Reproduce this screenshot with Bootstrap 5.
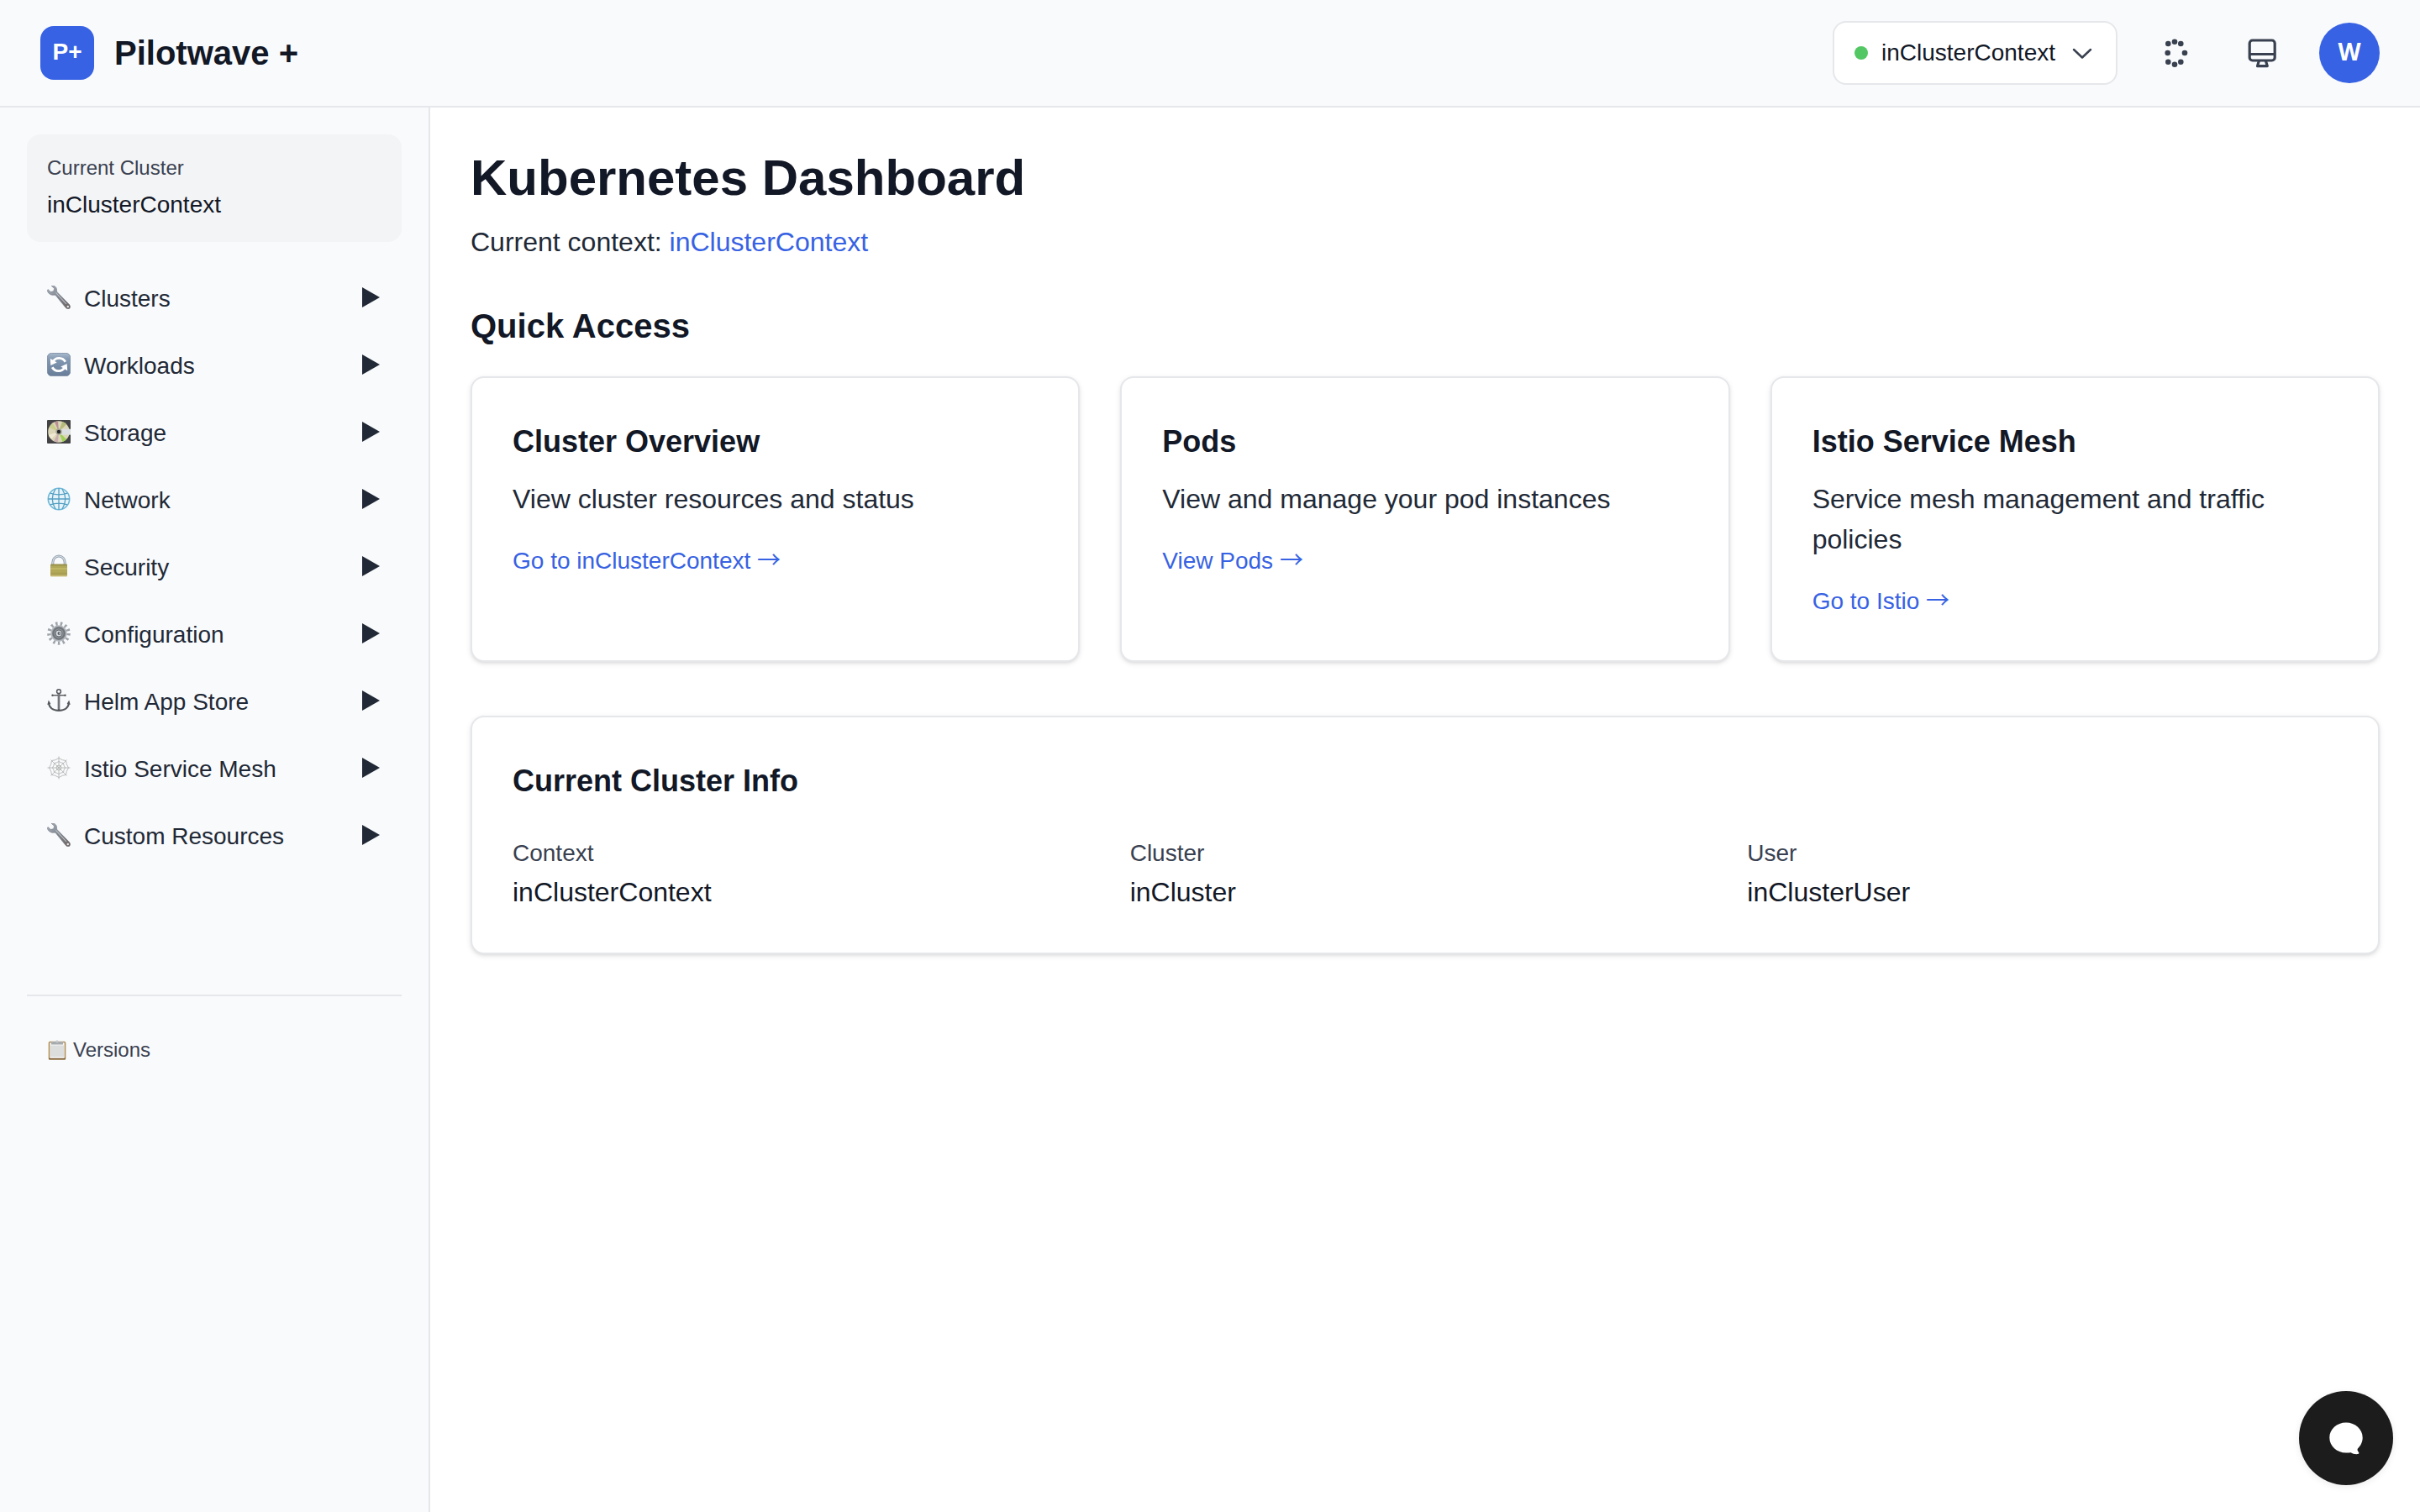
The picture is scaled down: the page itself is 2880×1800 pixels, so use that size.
<!DOCTYPE html>
<html lang="en">
<head>
<meta charset="utf-8">
<meta name="viewport" content="width=device-width, initial-scale=1">
<title>Pilotwave +</title>
<link href="https://cdn.jsdelivr.net/npm/bootstrap@5.3.0/dist/css/bootstrap.min.css" rel="stylesheet">
<style>
:root { --line:#e5e7ea; --ink:#121826; --ink-2:#212936; --ink-3:#394150; --brand:#3762e3; --pale:#f9fafc; }
body { font-family:"Liberation Sans",Arial,sans-serif; font-size:32px; line-height:48px; color:var(--ink-2); background:#fff; }
h1,h2,h3,p { margin:0; line-height:56px; font-weight:700; color:var(--ink); }
p { font-weight:400; line-height:48px; color:var(--ink-2); }
a { color:var(--brand); text-decoration:none; }
.topbar { background:var(--pale); border-bottom:2px solid var(--line); padding:25px 48px; }
.brand-mark { width:64px; height:64px; border-radius:16px; background:var(--brand); color:#fff; font-size:28px; font-weight:700; padding-bottom:2px; }
.brand-name { font-size:40px; font-weight:700; line-height:56px; color:var(--ink); }
.top-tools { gap:32px; }
.ctx-btn { background:#fff; border:2px solid var(--line); border-radius:16px; padding:16px 24px; font-size:28px; line-height:40px; color:var(--ink); }
.ctx-dot { width:16px; height:16px; border-radius:50%; background:#52c763; }
.tool-btn, .avatar { width:72px; height:72px; border:0; border-radius:50%; background:none; color:var(--ink-3); padding:0; }
.avatar { background:var(--brand); color:#fff; font-family:"Open Sans","Liberation Sans",sans-serif; font-size:28px; font-weight:700; padding-bottom:4px; }
.sidebar { width:512px; background:var(--pale); border-right:2px solid var(--line); padding:32px; }
.now-box { background:#f3f4f6; border-radius:16px; padding:24px; }
.tiny { font-size:24px; line-height:32px; color:var(--ink-3); }
.text-28 { font-size:28px; line-height:40px; color:var(--ink); }
.side-btn { border:0; background:none; padding:16px 24px; font-size:28px; line-height:40px; color:var(--ink-2); text-align:left; }
.side-foot { border-top:2px solid var(--line); margin-top:152px; padding-top:32px; }
.side-foot a { padding:16px 24px; gap:7px; }
.content { padding:48px; min-width:0; }
.content h1 { font-size:60px; line-height:72px; }
.content h2 { font-size:40px; }
.content h3 { font-size:36px; }
.tiles { display:grid; grid-template-columns:repeat(3,minmax(0,1fr)); gap:48px; }
.facts { display:grid; grid-template-columns:repeat(3,minmax(0,1fr)); gap:32px; margin-top:32px; }
.facts p { color:var(--ink); }
.info { margin-top:64px; }
.panel { background:#fff; border:2px solid var(--line); border-radius:16px; padding:48px; box-shadow:0 2px 6px rgba(0,0,0,.1),0 2px 4px -2px rgba(0,0,0,.1); }
.small-in { font-size:28px; line-height:40px; }
.label-in { font-size:28px; line-height:40px; color:var(--ink-3); }
.arrow { font-family:"Noto Sans CJK JP",sans-serif; line-height:32px; }
.chat { position:fixed; right:32px; bottom:32px; width:112px; height:112px; border:0; border-radius:50%; background:#1c1c1c; box-shadow:0 2px 8px rgba(0,0,0,.08); padding:0; }
svg { display:block; flex:none; }
</style>
<script src="https://cdn.jsdelivr.net/npm/bootstrap@5.3.0/dist/js/bootstrap.bundle.min.js"></script>
</head>
<body class="d-flex flex-column min-vh-100">
<svg width="0" height="0" class="position-absolute" aria-hidden="true">
  <defs>
    <linearGradient id="steel" x1="0" y1="0" x2="1" y2="1"><stop offset="0" stop-color="#a9b3bf"/><stop offset=".5" stop-color="#7d838c"/><stop offset="1" stop-color="#6d6260"/></linearGradient>
    <linearGradient id="blue" x1="0" y1="0" x2="0" y2="1"><stop offset="0" stop-color="#a9bacd"/><stop offset=".25" stop-color="#8499b2"/><stop offset="1" stop-color="#677d99"/></linearGradient>
    <linearGradient id="brass" x1="0" y1="0" x2="0" y2="1"><stop offset="0" stop-color="#8f8742"/><stop offset=".3" stop-color="#c2b966"/><stop offset=".8" stop-color="#a89d50"/><stop offset="1" stop-color="#d3c98a"/></linearGradient>
    <symbol id="wrench" viewBox="0 0 28 28">
      <path d="M5.200.3c3.300-.7 6.200 1.300 6.300 4.600.1 1.200-.1 2.100.7 3l13.600 13.900c1.600 1.500 2.400 3.600 1.200 5.100-1.400 1.500-3.800 1-5.100-.9L10.400 11.800c-.8-.8-1.700-.6-2.800-.5C3.800 11.500.5 8.800.3 5.300l.7-.7 3.300 2.900 3.400-.8 1-3.300L5.200.3z" fill="url(#steel)" stroke="#737780" stroke-width=".6"/>
      <path d="M10.500 8.500 23 22" stroke="#c3c7cc" stroke-width="1.100"/><circle cx="24.800" cy="25" r="1.200" fill="#e9e6e4"/>
    </symbol>
    <symbol id="cycle" viewBox="0 0 28 28">
      <rect x=".4" y=".4" width="27.200" height="27.200" rx="5" fill="url(#blue)" stroke="#71849c" stroke-width=".8"/>
      <path d="M7 10.400A8.600 8.600 0 0 1 21.800 10.800M21 17.600A8.600 8.600 0 0 1 6.200 17.200" fill="none" stroke="#fff" stroke-width="2.900"/>
      <path d="M3.800 6.800 4.300 15l7.400-3.600zM24.200 21.200 23.700 13l-7.400 3.600z" fill="#fff"/>
    </symbol>
    <symbol id="disc" viewBox="0 0 28 28">
      <rect width="28" height="28" rx="1" fill="#434345"/><circle cx="14" cy="14" r="12.800" fill="#dcd6b8"/>
      <path d="M14 14 2.600 9a12.600 12.600 0 0 1 4-5z" fill="#c9cf8a"/><path d="M14 14 9 2.400a12.600 12.600 0 0 1 4-1z" fill="#b98f93"/><path d="M14 14 18 2a12.600 12.600 0 0 1 5 3.200z" fill="#b5b97a"/><path d="M14 14 5 22.800a12.600 12.600 0 0 1-3.200-5z" fill="#efe9d2"/><path d="M14 14 13 26.600a12.600 12.600 0 0 1-5-1.600z" fill="#c9aeb0"/><path d="M14 14 23 23a12.600 12.600 0 0 1-4.500 2.900z" fill="#9ecf55"/>
      <path d="M14 10.800h14v6.800H14z" fill="#dcdfe2"/><circle cx="14" cy="14" r="3.800" fill="#a9a796"/><circle cx="14" cy="14" r="2.200" fill="#242426"/>
    </symbol>
    <symbol id="globe" viewBox="0 0 28 28">
      <circle cx="14" cy="14" r="12.700" fill="#e6f4fa" stroke="#6db8d8" stroke-width="1.600"/>
      <path d="M14 1.300v25.400M1.300 14h25.400M3.800 7.200q10.200 3.300 20.400 0M3.800 20.800q10.200-3.300 20.400 0M10 2Q2.500 14 10 26M18 2q7.500 12 0 24" fill="none" stroke="#559fc1" stroke-width="1.300"/>
    </symbol>
    <symbol id="lock" viewBox="0 0 28 28">
      <path d="M6.800 13V9.700a7.200 7.700 0 0 1 14.400 0V13" fill="none" stroke="#93a0ad" stroke-width="3"/><path d="M6.800 13V9.700a7.200 7.700 0 0 1 14.400 0V13" fill="none" stroke="#d5dce3" stroke-width="1.200"/>
      <rect x="4" y="11.500" width="20" height="15" rx="1" fill="url(#brass)"/><path d="M4 15.500h20M4 19h20M4 22.500h20" stroke="#a89e55" stroke-width=".6"/>
    </symbol>
    <symbol id="gear" viewBox="0 0 28 28">
      <circle cx="14" cy="14" r="11.600" fill="none" stroke="#9da3aa" stroke-width="4.400" stroke-dasharray="2.400 3.207"/>
      <circle cx="14" cy="14" r="9" fill="#8c9197" stroke="#b4b9bf" stroke-width="1.600"/><circle cx="14" cy="14" r="6.600" fill="none" stroke="#6f747a" stroke-width="1.800"/>
      <circle cx="14" cy="14" r="4" fill="#d5dae0" stroke="#666b72" stroke-width="1"/><circle cx="14.500" cy="14" r="2" fill="#555b62"/><path d="M14.600 12.200q2 1.600 0 3.600z" fill="#fff"/>
    </symbol>
    <symbol id="anchor" viewBox="0 0 28 28">
      <g fill="none" stroke="#55585c"><circle cx="14" cy="3.200" r="2.400" stroke-width="1.500"/><path d="M14 5.600V25" stroke-width="2.600"/><path d="M6.500 7.700h15" stroke-width="1.400"/><path d="M2 16.500C2.500 23 8 25.700 14 26c6-.3 11.500-3 12-9.500" stroke-width="2.100"/></g>
      <path d="M1.800 13.500.3 19l4-1.200zM26.200 13.500l1.500 5.500-4-1.200z" fill="#55585c"/><path d="M14 6v18" stroke="#a9acb0" stroke-width=".7"/><circle cx="6.500" cy="7.700" r="1.200" fill="#55585c"/><circle cx="21.500" cy="7.700" r="1.200" fill="#55585c"/>
    </symbol>
    <symbol id="web" viewBox="0 0 28 28">
      <g fill="none" stroke="#b3b4b3" stroke-width=".9"><path d="M14 .5v27M.5 14h27M4.500 4.500l19 19M23.500 4.500l-19 19"/><path d="M14 2.500Q18.500 5.500 22.500 5.500 22.500 9.500 25.500 14 22.500 18.500 22.500 22.500 18.500 22.500 14 25.500 9.500 22.500 5.500 22.500 5.500 18.500 2.500 14 5.500 9.500 5.500 5.500 9.500 5.500 14 2.500z"/><path d="M14 6.500Q17 8.500 19.500 8.500 19.500 11 21.500 14 19.500 17 19.500 19.500 17 19.500 14 21.500 11 19.500 8.500 19.500 8.500 17 6.500 14 8.500 11 8.500 8.500 11 8.500 14 6.500z"/><circle cx="14" cy="14" r="3"/></g>
    </symbol>
    <symbol id="play" viewBox="0 0 24 28"><path d="M1 0v24L22 12z" fill="#212936"/></symbol>
  </defs>
</svg>

<header class="topbar d-flex align-items-center justify-content-between">
  <div class="d-flex align-items-center gap-4">
    <div class="brand-mark d-flex align-items-center justify-content-center">P+</div>
    <span class="brand-name">Pilotwave +</span>
  </div>
  <div class="top-tools d-flex align-items-center">
    <button type="button" class="ctx-btn d-flex align-items-center gap-3">
      <span class="ctx-dot"></span><span>inClusterContext</span>
      <svg width="32" height="32" viewBox="0 0 32 32" fill="none" stroke="#394150" stroke-width="2.500" stroke-linecap="round" stroke-linejoin="round"><path d="M6 12l10 9.500 10-9.500"/></svg>
    </button>
    <button type="button" class="tool-btn d-flex align-items-center justify-content-center" aria-label="Theme">
      <svg width="40" height="40" viewBox="0 0 40 40" fill="#394150"><circle cx="20" cy="6.700" r="3.300"/><circle cx="12.300" cy="9" r="3.300"/><circle cx="27.300" cy="9" r="3.300"/><circle cx="11.700" cy="20" r="3.300"/><circle cx="32" cy="20" r="3.300"/><circle cx="12.300" cy="30.700" r="3.300"/><circle cx="27.300" cy="30.700" r="3.300"/><circle cx="20" cy="33.700" r="3.300"/></svg>
    </button>
    <button type="button" class="tool-btn d-flex align-items-center justify-content-center" aria-label="Display">
      <svg width="40" height="40" viewBox="0 0 40 40" fill="none" stroke="#394150" stroke-width="3.200" stroke-linejoin="round"><rect x="5.200" y="5" width="30" height="24" rx="3.500"/><path d="M5.200 21.500h30M16.500 29l-2 6.600h11.800l-2-6.600"/></svg>
    </button>
    <button type="button" class="avatar">W</button>
  </div>
</header>

<div class="d-flex flex-grow-1">
  <aside class="sidebar flex-shrink-0">
    <div class="now-box d-flex flex-column gap-2 mb-4">
      <div class="tiny">Current Cluster</div>
      <div class="text-28">inClusterContext</div>
    </div>
    <nav class="d-flex flex-column gap-2 pt-2">
      <button type="button" class="side-btn d-flex align-items-center gap-3"><svg class="mb-1" width="28" height="28"><use href="#wrench"/></svg><span class="flex-grow-1">Clusters</span><svg width="24" height="28"><use href="#play"/></svg></button>
      <button type="button" class="side-btn d-flex align-items-center gap-3"><svg class="mb-1" width="28" height="28"><use href="#cycle"/></svg><span class="flex-grow-1">Workloads</span><svg width="24" height="28"><use href="#play"/></svg></button>
      <button type="button" class="side-btn d-flex align-items-center gap-3"><svg class="mb-1" width="28" height="28"><use href="#disc"/></svg><span class="flex-grow-1">Storage</span><svg width="24" height="28"><use href="#play"/></svg></button>
      <button type="button" class="side-btn d-flex align-items-center gap-3"><svg class="mb-1" width="28" height="28"><use href="#globe"/></svg><span class="flex-grow-1">Network</span><svg width="24" height="28"><use href="#play"/></svg></button>
      <button type="button" class="side-btn d-flex align-items-center gap-3"><svg class="mb-1" width="28" height="28"><use href="#lock"/></svg><span class="flex-grow-1">Security</span><svg width="24" height="28"><use href="#play"/></svg></button>
      <button type="button" class="side-btn d-flex align-items-center gap-3"><svg class="mb-1" width="28" height="28"><use href="#gear"/></svg><span class="flex-grow-1">Configuration</span><svg width="24" height="28"><use href="#play"/></svg></button>
      <button type="button" class="side-btn d-flex align-items-center gap-3"><svg class="mb-1" width="28" height="28"><use href="#anchor"/></svg><span class="flex-grow-1">Helm App Store</span><svg width="24" height="28"><use href="#play"/></svg></button>
      <button type="button" class="side-btn d-flex align-items-center gap-3"><svg class="mb-1" width="28" height="28"><use href="#web"/></svg><span class="flex-grow-1">Istio Service Mesh</span><svg width="24" height="28"><use href="#play"/></svg></button>
      <button type="button" class="side-btn d-flex align-items-center gap-3"><svg class="mb-1" width="28" height="28"><use href="#wrench"/></svg><span class="flex-grow-1">Custom Resources</span><svg width="24" height="28"><use href="#play"/></svg></button>
    </nav>
    <div class="side-foot">
      <a href="#" class="tiny d-flex align-items-center">
        <svg width="24" height="24" viewBox="0 0 24 24"><rect x="2.500" y="2.500" width="19" height="20.500" rx="1" fill="#f6f6f6" stroke="#b08f58" stroke-width="1.600"/><rect x="4" y="6.500" width="16" height="13.500" fill="#dcdddd"/><path d="M2 22.500h20" stroke="#7c5c34" stroke-width="1.500"/><path d="M5 2h14v3.500H5z" fill="#a7abae"/><circle cx="12" cy="1.800" r="1.500" fill="#c6cacd"/></svg>
        Versions</a>
    </div>
  </aside>

  <main class="content flex-grow-1">
    <h1>Kubernetes Dashboard</h1>
    <p class="pt-3">Current context: <a href="#">inClusterContext</a></p>
    <h2 class="mt-5">Quick Access</h2>
    <section class="tiles pt-2 mt-4">
      <article class="panel">
        <h3>Cluster Overview</h3>
        <p class="pt-3">View cluster resources and status</p>
        <div class="mt-4"><a href="#" class="small-in">Go to inClusterContext <span class="arrow">→</span></a></div>
      </article>
      <article class="panel">
        <h3>Pods</h3>
        <p class="pt-3">View and manage your pod instances</p>
        <div class="mt-4"><a href="#" class="small-in">View Pods <span class="arrow">→</span></a></div>
      </article>
      <article class="panel">
        <h3>Istio Service Mesh</h3>
        <p class="pt-3">Service mesh management and traffic policies</p>
        <div class="mt-4"><a href="#" class="small-in">Go to Istio <span class="arrow">→</span></a></div>
      </article>
    </section>
    <section class="panel info">
      <h3>Current Cluster Info</h3>
      <div class="facts">
        <div><div><span class="label-in">Context</span></div><p>inClusterContext</p></div>
        <div><div><span class="label-in">Cluster</span></div><p>inCluster</p></div>
        <div><div><span class="label-in">User</span></div><p>inClusterUser</p></div>
      </div>
    </section>
  </main>
</div>
<button type="button" class="chat d-flex align-items-center justify-content-center" aria-label="Chat">
  <svg width="40" height="40" viewBox="0 0 40 40" fill="#fff"><path d="M20 1.500C9 1.500.300 9.500.300 19.500S9 37.500 20 37.500c2 0 3.800-.3 5.600-.3 2.200 1.300 5 2.200 8.400 1.900 1.400-.1 1.800-1.400.9-2.400-1.400-1.500-1.700-3-1-4.200 3.400-3.200 5.800-7.700 5.800-13C39.700 9.500 31 1.500 20 1.500z"/></svg>
</button>
</body>
</html>
